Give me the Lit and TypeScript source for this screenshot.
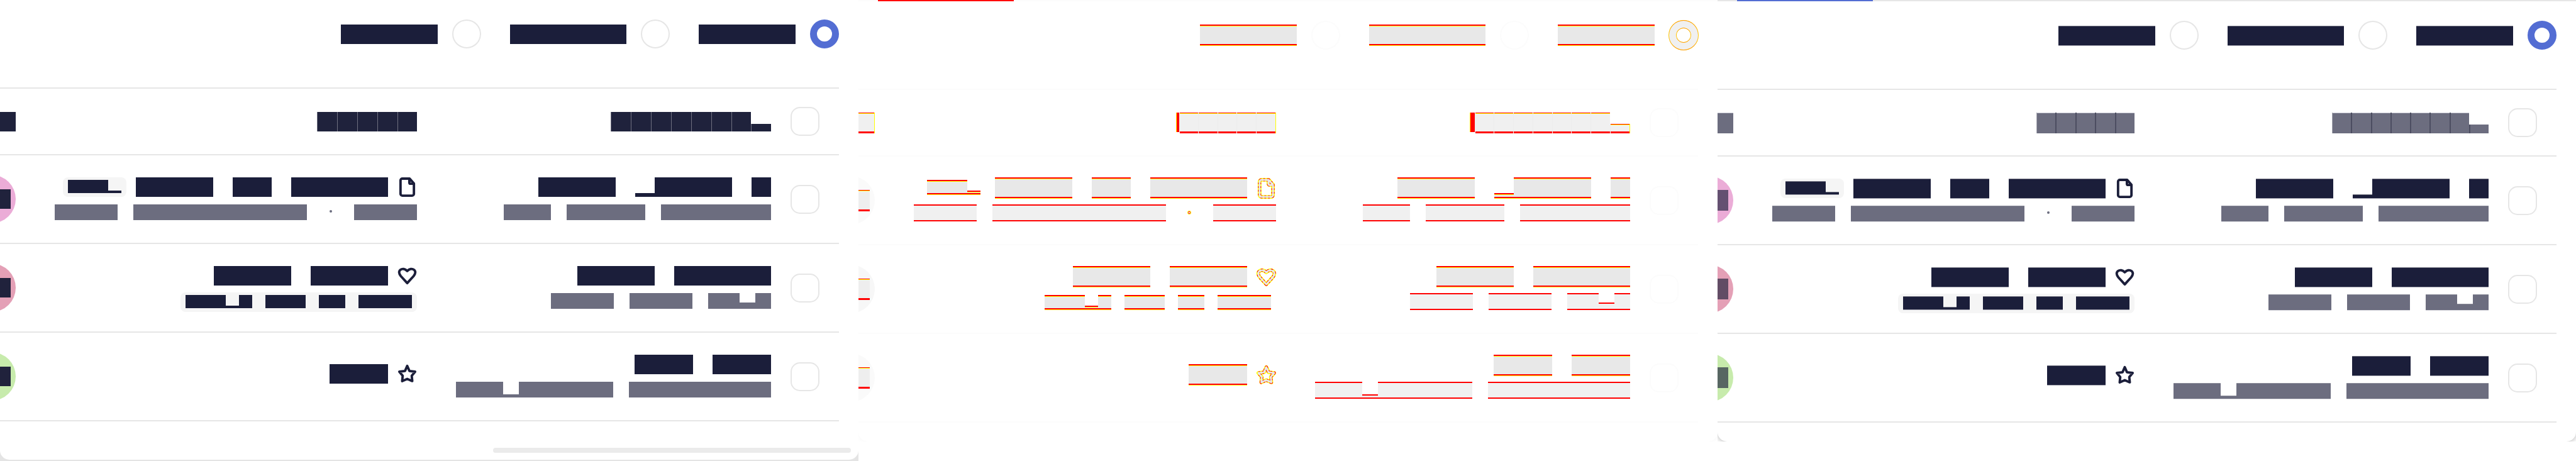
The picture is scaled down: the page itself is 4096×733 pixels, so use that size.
import { LitElement, html, svg, css, nothing } from "lit";
import { customElement, property } from "lit/decorators.js";

/** A run of block glyphs: how many, and an optional reduced height in pixels. */
type Run = { n: number; low?: number; dot?: boolean };
type Word = Run[];
type Size = "title" | "sub" | "mini";
type Row = {
  tone: string;
  icon: "file" | "heart" | "star";
  name: Word[];
  note: Word[];
  title: Word[];
  tag?: Word[];
  detail?: Word[];
  chip?: Word[];
};

const GLYPH: Record<Size, number> = { title: 30.85, sub: 25.07, mini: 21.2 };

const w = (n: number): Word => [{ n }];

/* Words are listed in reading order, right to left. */
const ROWS: Row[] = [
  {
    tone: "pink",
    icon: "file",
    name: [w(1), [{ n: 4 }, { n: 1, low: 6 }], w(4)],
    note: [w(7), w(5), w(3)],
    title: [w(5), w(2), w(4)],
    tag: [[{ n: 1, low: 4 }, { n: 3 }]],
    detail: [w(4), [{ n: 1, dot: true }], w(11), w(4)],
  },
  {
    tone: "rose",
    icon: "heart",
    name: [w(5), w(4)],
    note: [[{ n: 1 }, { n: 1, low: 10 }, { n: 2 }], w(4), w(4)],
    title: [w(4), w(4)],
    chip: [w(4), w(2), w(3), [{ n: 1 }, { n: 1, low: 4 }, { n: 3 }]],
  },
  {
    tone: "green",
    icon: "star",
    name: [w(3), w(3)],
    note: [w(9), [{ n: 6 }, { n: 1, low: 5 }, { n: 3 }]],
    title: [w(3)],
  },
];

const ICONS = {
  file: "M20 2H8a3 3 0 0 0-3 3v22a3 3 0 0 0 3 3h16a3 3 0 0 0 3-3V10L20 2zM19.500 2.500v6a2 2 0 0 0 2 2H26.500",
  heart:
    "M16 28L5.500 16.500C2.200 12.500 1.800 8.500 4.800 6.200 8 3.800 12.500 4.500 16 8.200 19.500 4.500 24 3.800 27.200 6.200 30.200 8.500 29.800 12.500 26.500 16.500z",
  star: "M16 2.800l3.600 8.400 9.400 1.200-5.600 6.600.9 8.800L16 24.200l-8.300 3.600.9-8.800L3 12.400l9.400-1.200z",
};

@customElement("block-text")
export class BlockText extends LitElement {
  @property({ attribute: false }) words: Word[] = [];
  @property({ reflect: true }) size: Size = "title";
  @property({ reflect: true }) look = "base";

  static styles = css`
    :host {
      --h: 31px;
      display: flex;
      flex: none;
      gap: 31px;
    }
    :host([size="sub"]) {
      --h: 25px;
      gap: 25px;
    }
    :host([size="mini"]) {
      --h: 21px;
      gap: 21px;
    }
    .word {
      display: flex;
      align-items: flex-end;
      height: var(--h);
    }
    .run {
      height: 100%;
      background: var(--ink);
    }
    :host([look="next"]) .run {
      box-shadow: 0 1px #a1a2ae, inset 0 1px #70717f;
    }
    :host([look="next"][size="sub"]) .run {
      box-shadow: 0 1px #dedfe4, inset 0 1px #8a8b98;
    }
    :host([look="diff"]) .run {
      box-shadow: 0 -2px #f00, 0 1px #ff0, inset 0 1px #ff0, inset 0 -2px #f00;
    }
    :host([look="diff"][size="sub"]) .run {
      box-shadow: 0 -2px #f00, inset 0 -2px #f00;
    }
    .slot {
      display: flex;
      align-items: center;
      justify-content: center;
      height: 22px;
      align-self: flex-start;
    }
    .dot {
      width: 4px;
      height: 4px;
      border-radius: 2px;
      background: var(--ink);
    }
    :host([look="diff"]) .dot {
      box-shadow: 0 0 0 1px #ff0, inset 0 1px #f00, inset 0 -1px #f00;
    }
  `;

  render() {
    const g = GLYPH[this.size];
    return this.words.map(
      (word) => html`<span class="word"
        >${word.map((r) => {
          const width = `width:${Math.round(r.n * g)}px`;
          return r.dot
            ? html`<span class="slot" style=${width}><i class="dot"></i></span>`
            : html`<span class="run" style=${r.low ? `${width};height:${r.low}px` : width}></span>`;
        })}</span
      >`
    );
  }
}

@customElement("table-panel")
export class TablePanel extends LitElement {
  @property({ reflect: true }) look: "base" | "diff" | "next" = "base";

  static styles = css`
    :host {
      --ink: #1b1e3a;
      --muted: #6c6d7f;
      --head: #1f223c;
      --line: #e6e6e6;
      --accent: #536dd3;
      --chip: #f5f5f5;
      --pink: #ebacd7;
      --rose: #e4a0b6;
      --green: #c7ebac;
      --badge: #20223c;
      display: flex;
      flex-direction: column;
      min-width: 0;
      direction: rtl;
    }
    :host([look="next"]) {
      --head: #6c6d7f;
      --badge: rgba(27, 30, 58, 0.65);
    }
    :host([look="diff"]) {
      --ink: #e8e8e8;
      --muted: #f0f0f0;
      --head: #f0f0f0;
      --line: #fcfcfc;
      --accent: #f00;
      --chip: transparent;
      --pink: #fafafa;
      --rose: #f7f7f7;
      --green: #fafafa;
      --badge: #eee;
    }
    .frame {
      display: flex;
      flex-direction: column;
      overflow: hidden;
      background: #fff;
    }
    :host([look="base"]) .frame {
      flex: 1;
      padding-bottom: 2px;
      background: #e4e4e4;
    }
    .card {
      display: flex;
      flex-direction: column;
      flex: 1;
      padding-bottom: 30px;
      border-radius: 0 0 15px 15px;
      background: #fff;
      overflow: hidden;
    }
    :host([look="base"]) .card {
      padding-bottom: 11px;
    }
    :host([look="next"]) .card {
      box-shadow: 0 1px 8px rgba(0, 0, 0, 0.3);
    }
    :host([look="diff"]) .card {
      box-shadow: 0 1px 8px rgba(0, 0, 0, 0.03);
    }
    .tabs {
      display: flex;
      justify-content: flex-end;
      padding: 0 31px;
      background: var(--line);
    }
    .tab {
      width: 216px;
      height: 2px;
      background: var(--accent);
    }
    .filters {
      display: flex;
      gap: 46px;
      margin: 0;
      padding: 31px 31px 62px;
      border: 0;
    }
    label {
      display: flex;
      align-items: center;
      gap: 23px;
    }
    input {
      appearance: none;
      box-sizing: border-box;
      display: block;
      flex: none;
      width: 46px;
      height: 46px;
      margin: 0;
      border: 2px solid var(--line);
      background: #fff;
    }
    input[type="radio"] {
      border-radius: 50%;
    }
    input[type="radio"]:checked {
      border: 11px solid var(--accent);
    }
    :host([look="diff"]) input[type="radio"]:checked {
      border-color: #f0f0f0;
      box-shadow: 0 -1px #f90, 0 1px #f90, 0 0 0 1px #fc0, inset 0 1px #f90,
        inset 0 -1px #f90, inset 0 0 0 1px #fc0;
    }
    input[type="checkbox"] {
      border-radius: 15px;
    }
    .grid {
      padding-right: 31px;
    }
    table {
      width: 100%;
      table-layout: fixed;
      border-collapse: separate;
      border-spacing: 0;
      border-top: 2px solid var(--line);
    }
    .c-check {
      width: 108px;
    }
    .c-name {
      width: 563px;
    }
    .c-title {
      width: 638px;
    }
    th,
    td {
      box-sizing: border-box;
      height: 141px;
      padding: 0;
      border-bottom: 2px solid var(--line);
      vertical-align: top;
    }
    th {
      height: 106px;
      vertical-align: middle;
    }
    td.check,
    td.face {
      vertical-align: middle;
    }
    .check {
      padding-right: 31px;
    }
    .text {
      padding-top: 35px;
    }
    .text.single {
      padding-top: 50px;
    }
    .stack {
      display: flex;
      flex-direction: column;
      align-items: flex-start;
      gap: 11px;
    }
    .line {
      display: flex;
      gap: 15px;
    }
    .muted {
      --ink: var(--muted);
      padding-top: 1px;
    }
    .chip {
      box-sizing: border-box;
      height: 31px;
      padding: 4px 8px 6px;
      border-radius: 8px;
      background: var(--chip);
    }
    .icon {
      display: block;
      width: 31px;
      height: 31px;
      overflow: visible;
      fill: none;
      stroke: var(--ink);
      stroke-width: 4;
      stroke-linejoin: round;
      stroke-linecap: round;
    }
    .icon .halo {
      stroke: #ff0;
      stroke-width: 6;
    }
    .icon .edge {
      stroke: #f00;
      stroke-width: 5;
      stroke-dasharray: 3 3;
      stroke-linecap: butt;
    }
    .icon .core {
      stroke-width: 3;
    }
    .heading {
      display: flex;
      align-items: flex-end;
      height: 31px;
    }
    .cell {
      box-sizing: border-box;
      flex: 1;
      height: 100%;
      background: var(--head);
      border-left: 1px solid #6f7080;
    }
    .cell.low {
      height: 12px;
    }
    :host([look="next"]) .heading,
    :host([look="diff"]) .heading {
      height: 33px;
    }
    :host([look="next"]) .cell {
      border-left: 2px solid #4c4d61;
      box-shadow: inset 0 1px #cfcfd8;
    }
    :host([look="next"]) .cell:last-child {
      border-left: 1px solid #a4a5b0;
    }
    :host([look="next"]) .cell.low {
      height: 14px;
      box-shadow: none;
    }
    :host([look="diff"]) .cell {
      border-left-color: #ececec;
      box-shadow: inset 0 1px #f00, inset 0 2px #ff0, inset 0 -3px #f00;
    }
    :host([look="diff"]) .cell:first-child {
      border-right: 1px solid #ff0;
    }
    :host([look="diff"]) .cell.low {
      height: 15px;
    }
    .shift {
      align-self: flex-start;
      height: 31px;
      background: #f00;
      border-left: 1px solid #ff0;
    }
    .avatar {
      display: flex;
      align-items: center;
      box-sizing: border-box;
      width: 77px;
      height: 77px;
      padding: 0 8px;
      border-radius: 50%;
    }
    .pink {
      background: var(--pink);
    }
    .rose {
      background: var(--rose);
    }
    .green {
      background: var(--green);
    }
    .badge {
      width: 61px;
      height: 31px;
      background: var(--badge);
    }
    :host([look="next"]) .badge {
      height: 33px;
    }
    :host([look="diff"]) .badge {
      height: 34px;
      box-shadow: inset 0 1px #f00, inset 0 2px #ff0, inset 0 -3px #f00;
    }
    .scroll {
      width: 569px;
      height: 8px;
      margin: auto 12px 0;
      border-radius: 4px;
      background: #ebebeb;
    }
  `;

  private text(words: Word[], size: Size) {
    return html`<block-text .words=${words} size=${size} look=${this.look}></block-text>`;
  }

  private icon(name: Row["icon"]) {
    const d = ICONS[name];
    return html`<svg class="icon" viewBox="0 0 32 32" aria-hidden="true">
      ${this.look === "diff"
        ? svg`<path class="halo" d=${d}></path><path class="edge" d=${d}></path><path class="core" d=${d}></path>`
        : svg`<path d=${d}></path>`}
    </svg>`;
  }

  private heading(count: number, width: number, shift: number, low = false) {
    const cells = Array.from({ length: count }, (_, i) => i);
    return html`<div class="heading" style="width:${width}px">
      ${cells.map((i) => html`<span class=${low && i === 0 ? "cell low" : "cell"}></span>`)}
      ${shift ? html`<span class="shift" style="width:${shift}px"></span>` : nothing}
    </div>`;
  }

  private row(r: Row, i: number) {
    const single = !r.detail && !r.chip;
    return html`<tr>
      <td class="check"><input type="checkbox" aria-label="Row ${i + 1}" /></td>
      <td class="text">
        <div class="stack">
          <div class="line">${this.text(r.name, "title")}</div>
          <div class="line muted">${this.text(r.note, "sub")}</div>
        </div>
      </td>
      <td class=${single ? "text single" : "text"}>
        <div class="stack">
          <div class="line">
            ${this.icon(r.icon)} ${this.text(r.title, "title")}
            ${r.tag ? html`<span class="chip">${this.text(r.tag, "mini")}</span>` : nothing}
          </div>
          ${r.detail ? html`<div class="line muted">${this.text(r.detail, "sub")}</div>` : nothing}
          ${r.chip ? html`<span class="chip">${this.text(r.chip, "mini")}</span>` : nothing}
        </div>
      </td>
      <td class="face">
        <div class="avatar ${r.tone}"><span class="badge"></span></div>
      </td>
    </tr>`;
  }

  render() {
    const next = this.look === "next";
    const diff = this.look === "diff";
    return html`<section class="frame">
      <div class="card">
        ${this.look === "base" ? nothing : html`<div class="tabs"><span class="tab"></span></div>`}
        <fieldset class="filters">
          ${[5, 6, 5].map(
            (n, i) => html`<label>
              <input type="radio" name="filter" aria-label="Filter ${i + 1}" ?checked=${i === 0} />
              ${this.text([w(n)], "title")}
            </label>`
          )}
        </fieldset>
        <div class="grid">
          <table>
            <colgroup>
              <col class="c-check" />
              <col class="c-name" />
              <col class="c-title" />
              <col />
            </colgroup>
            <thead>
              <tr>
                <th class="check"><input type="checkbox" aria-label="All rows" /></th>
                <th>${this.heading(8, next ? 249 : 255, diff ? 7 : 0, true)}</th>
                <th>${this.heading(5, next ? 156 : 159, diff ? 4 : 0)}</th>
                <th>${this.heading(4, 127, 0)}</th>
              </tr>
            </thead>
            <tbody>
              ${ROWS.map((r, i) => this.row(r, i))}
            </tbody>
          </table>
        </div>
        ${this.look === "base" ? html`<div class="scroll"></div>` : nothing}
      </div>
    </section>`;
  }
}

@customElement("app-root")
export class AppRoot extends LitElement {
  static styles = css`
    :host {
      display: grid;
      grid-template-columns: repeat(3, minmax(0, 1fr));
      min-height: 100vh;
      background: #fff;
      font-family: "Liberation Sans", Arial, sans-serif;
    }
  `;

  render() {
    return html`
      <table-panel look="base"></table-panel>
      <table-panel look="diff"></table-panel>
      <table-panel look="next"></table-panel>
    `;
  }
}
